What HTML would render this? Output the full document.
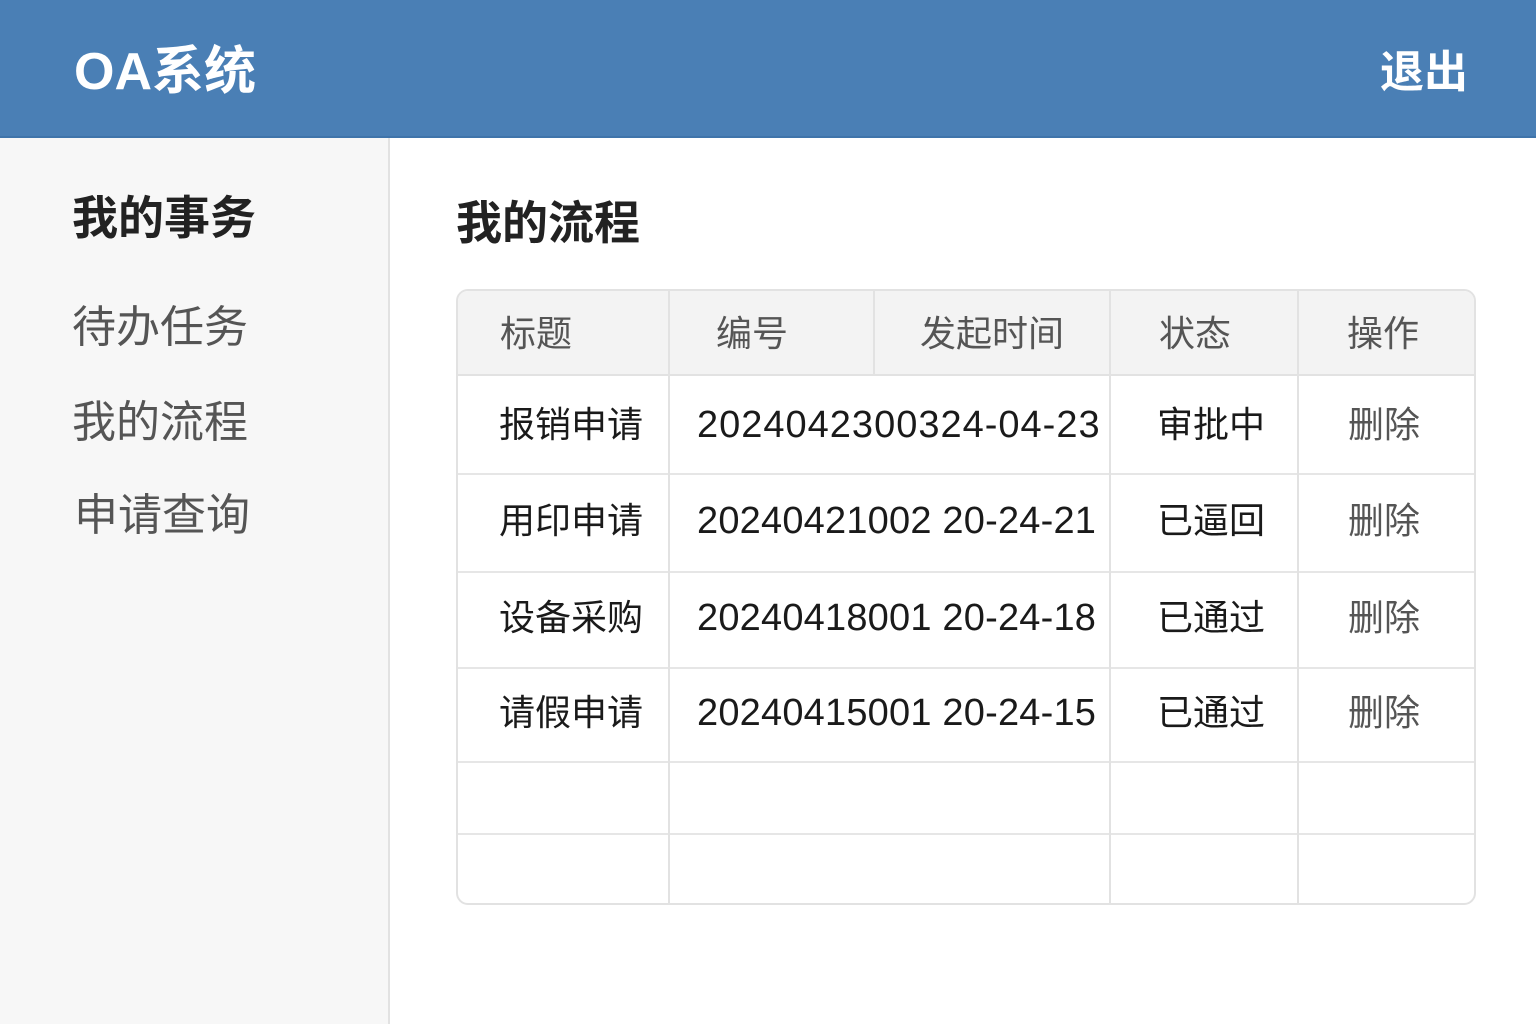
<!DOCTYPE html>
<html><head><meta charset="utf-8"><style>
*{margin:0;padding:0;box-sizing:border-box}
body{width:1536px;height:1024px;overflow:hidden;background:#fff;font-family:"Liberation Sans","Noto Sans CJK SC",sans-serif;position:relative}
.hd{position:absolute;left:0;top:0;width:1536px;height:138px;background:#4a7fb5;border-bottom:2px solid #3f74aa}
.t{position:absolute;white-space:nowrap;line-height:1}
.sb{position:absolute;left:0;top:138px;width:390px;height:886px;background:#f7f7f7;border-right:2px solid #e2e2e2}
.tb{position:absolute;left:456px;top:289px;width:1020px;height:616px;border:2px solid #e2e2e2;border-radius:12px;overflow:hidden}
.thead{position:absolute;left:0;top:0;width:100%;height:85px;background:#f3f3f3;border-bottom:2px solid #e2e2e2}
.vl{position:absolute;width:2px;background:#e2e2e2}
.hl{position:absolute;left:0;width:100%;height:2px;background:#e6e6e6}
.c{position:absolute;text-align:center;font-size:36px;line-height:1;white-space:nowrap}
.n{position:absolute;left:239px;font-size:38px;letter-spacing:1px;line-height:1;color:#1a1a1a;white-space:nowrap}
.n2{letter-spacing:0.2px}
.h{color:#555}
.b{color:#1a1a1a}
.d{color:#555}
</style></head><body>
<div class="hd"></div>
<div class="t" style="left:74px;top:46px;font-size:52px;font-weight:bold;color:#fff">OA系统</div>
<div class="t" style="left:1380px;top:51px;font-size:44px;font-weight:bold;color:#fff">退出</div>
<div class="sb"></div>
<div class="t" style="left:72px;top:195px;font-size:46px;font-weight:bold;color:#222">我的事务</div>
<div class="t" style="left:72px;top:306px;font-size:44px;color:#555">待办任务</div>
<div class="t" style="left:72px;top:401px;font-size:44px;color:#555">我的流程</div>
<div class="t" style="left:74px;top:494px;font-size:44px;color:#555">申请查询</div>
<div class="t" style="left:456px;top:200px;font-size:46px;font-weight:bold;color:#222">我的流程</div>
<div class="tb">
<div class="thead"></div>
<div class="hl" style="top:182px"></div>
<div class="hl" style="top:280px"></div>
<div class="hl" style="top:376px"></div>
<div class="hl" style="top:470px"></div>
<div class="hl" style="top:542px"></div>
<div class="vl" style="left:210px;top:0;height:616px"></div>
<div class="vl" style="left:415px;top:0;height:85px"></div>
<div class="vl" style="left:651px;top:0;height:616px"></div>
<div class="vl" style="left:839px;top:0;height:616px"></div>
<div class="c h" style="left:0;width:156px;top:25px">标题</div>
<div class="c h" style="left:212px;width:164px;top:25px">编号</div>
<div class="c h" style="left:417px;width:234px;top:25px">发起时间</div>
<div class="c h" style="left:653px;width:168px;top:25px">状态</div>
<div class="c h" style="left:841px;width:168px;top:25px">操作</div>

<div class="c b" style="left:0;width:226px;top:116px">报销申请</div>
<div class="n" style="top:115px">2024042300324-04-23</div>
<div class="c b" style="left:653px;width:200px;top:116px">审批中</div>
<div class="c d" style="left:841px;width:170px;top:116px">删除</div>

<div class="c b" style="left:0;width:226px;top:212px">用印申请</div>
<div class="n n2" style="top:211px">20240421002 20-24-21</div>
<div class="c b" style="left:653px;width:200px;top:212px">已逼回</div>
<div class="c d" style="left:841px;width:170px;top:212px">删除</div>

<div class="c b" style="left:0;width:226px;top:309px">设备采购</div>
<div class="n n2" style="top:308px">20240418001 20-24-18</div>
<div class="c b" style="left:653px;width:200px;top:309px">已通过</div>
<div class="c d" style="left:841px;width:170px;top:309px">删除</div>

<div class="c b" style="left:0;width:226px;top:404px">请假申请</div>
<div class="n n2" style="top:403px">20240415001 20-24-15</div>
<div class="c b" style="left:653px;width:200px;top:404px">已通过</div>
<div class="c d" style="left:841px;width:170px;top:404px">删除</div>
</div>
</body></html>
